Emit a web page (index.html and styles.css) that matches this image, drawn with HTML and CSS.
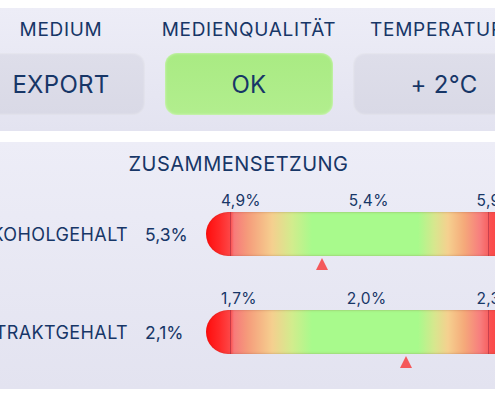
FILE: index.html
```html
<!DOCTYPE html>
<html lang="de">
<head>
<meta charset="utf-8">
<link rel="stylesheet" href="styles.css">
</head>
<body>
<section class="panel status">
  <div class="status-grid">
    <div class="col">
      <div class="label">MEDIUM</div>
      <div class="btn">EXPORT</div>
    </div>
    <div class="col">
      <div class="label">MEDIENQUALITÄT</div>
      <div class="btn btn-ok">OK</div>
    </div>
    <div class="col">
      <div class="label">TEMPERATUR</div>
      <div class="btn btn-temp">+ 2°C</div>
    </div>
  </div>
</section>
<section class="panel comp">
  <div class="title">ZUSAMMENSETZUNG</div>
  <div class="metric">
    <div class="name"><span>ALKOHOLGEHALT</span></div>
    <div class="val">5,3%</div>
    <div class="ticks"><span>4,9%</span><span>5,4%</span><span>5,9%</span></div>
    <div class="bar"></div>
    <div class="track"><span class="marker" style="left:116px"></span></div>
  </div>
  <div class="metric">
    <div class="name"><span>EXTRAKTGEHALT</span></div>
    <div class="val">2,1%</div>
    <div class="ticks"><span>1,7%</span><span>2,0%</span><span>2,3%</span></div>
    <div class="bar"></div>
    <div class="track"><span class="marker" style="left:200px"></span></div>
  </div>
</section>
</body>
</html>
```
FILE: styles.css
```css
html, body {
  margin: 0;
  padding: 0;
  background: #ffffff;
}
body {
  font-family: Inter, "Liberation Sans", sans-serif;
  color: #173667;
  width: 495px;
  overflow: hidden;
}
.panel {
  background: linear-gradient(#ededf7, #e3e3f0);
  overflow: hidden;
}
.status {
  margin-top: 8px;
  height: 123px;
  box-sizing: border-box;
  padding-top: 10px;
}
.status-grid {
  display: grid;
  grid-template-columns: repeat(3, 168px);
  column-gap: 20px;
  margin-left: -23px;
}
.col {
  display: flex;
  flex-direction: column;
  align-items: center;
}
.label {
  font-size: 19px;
  line-height: 24px;
  letter-spacing: 0.7px;
  white-space: nowrap;
  margin-bottom: 11px;
}
.btn {
  width: 100%;
  height: 62px;
  border-radius: 12px;
  background: linear-gradient(#dedeea, #d9d9e6);
  box-shadow: inset 0 0 3px rgba(255,255,255,0.6);
  display: flex;
  align-items: center;
  justify-content: center;
  box-sizing: border-box;
  font-size: 24px;
  letter-spacing: 0.3px;
}
.btn-ok {
  background: linear-gradient(#a9eb83, #b2ee8e);
}
.btn-temp {
  padding-left: 14px;
}
.comp {
  margin-top: 11px;
  height: 247px;
  box-sizing: border-box;
  padding-top: 10px;
}
.title {
  text-align: center;
  font-size: 20px;
  line-height: 24px;
  letter-spacing: 0.5px;
  margin-bottom: 14px;
  width: 477px;
}
.metric {
  display: grid;
  grid-template-columns: 128px 78px 310px;
  grid-template-rows: 22px 44px 32px;
}
.name {
  grid-column: 1;
  grid-row: 2;
  display: flex;
  justify-content: flex-end;
  align-items: center;
  font-size: 18px;
  letter-spacing: 0.4px;
  white-space: nowrap;
}
.val {
  grid-column: 2;
  grid-row: 2;
  display: flex;
  align-items: center;
  padding-left: 17px;
  font-size: 17.5px;
  letter-spacing: 0;
}
.ticks {
  grid-column: 3;
  grid-row: 1;
  display: flex;
  justify-content: space-between;
  align-items: center;
  padding-left: 15px;
  font-size: 15.5px;
  letter-spacing: 0.3px;
  margin-top: -1px;
}
.bar {
  grid-column: 3;
  grid-row: 2;
  border-radius: 22px 0 0 22px;
  background:
    linear-gradient(to right,
      transparent 24px,
      rgba(140,30,60,0.45) 24px,
      rgba(140,30,60,0.45) 25px,
      transparent 25px,
      transparent 282px,
      rgba(140,30,60,0.45) 282px,
      rgba(140,30,60,0.45) 283px,
      transparent 283px),
    linear-gradient(to right,
      #ff0c0c 0px,
      #ff2a2a 14px,
      #fd4646 24px,
      #f77a7a 28px,
      #f59c7b 42px,
      #f5cf8f 66px,
      #d2ec8d 86px,
      #a8fa8c 106px,
      #a8fa8c 212px,
      #d8e68e 229px,
      #f5d08f 242px,
      #f5aa7a 258px,
      #f77e7e 274px,
      #f76262 282px,
      #fa5050 284px,
      #ff2a2a 310px);
  box-shadow: inset 0 1px 2px rgba(120,60,40,0.16), inset 0 -1px 2px rgba(120,60,40,0.16);
}
.track {
  grid-column: 3;
  grid-row: 3;
  position: relative;
}
.marker {
  position: absolute;
  top: 2px;
  width: 0;
  height: 0;
  margin-left: -6.5px;
  border-left: 6.5px solid transparent;
  border-right: 6.5px solid transparent;
  border-bottom: 12px solid #f4585b;
}
```
